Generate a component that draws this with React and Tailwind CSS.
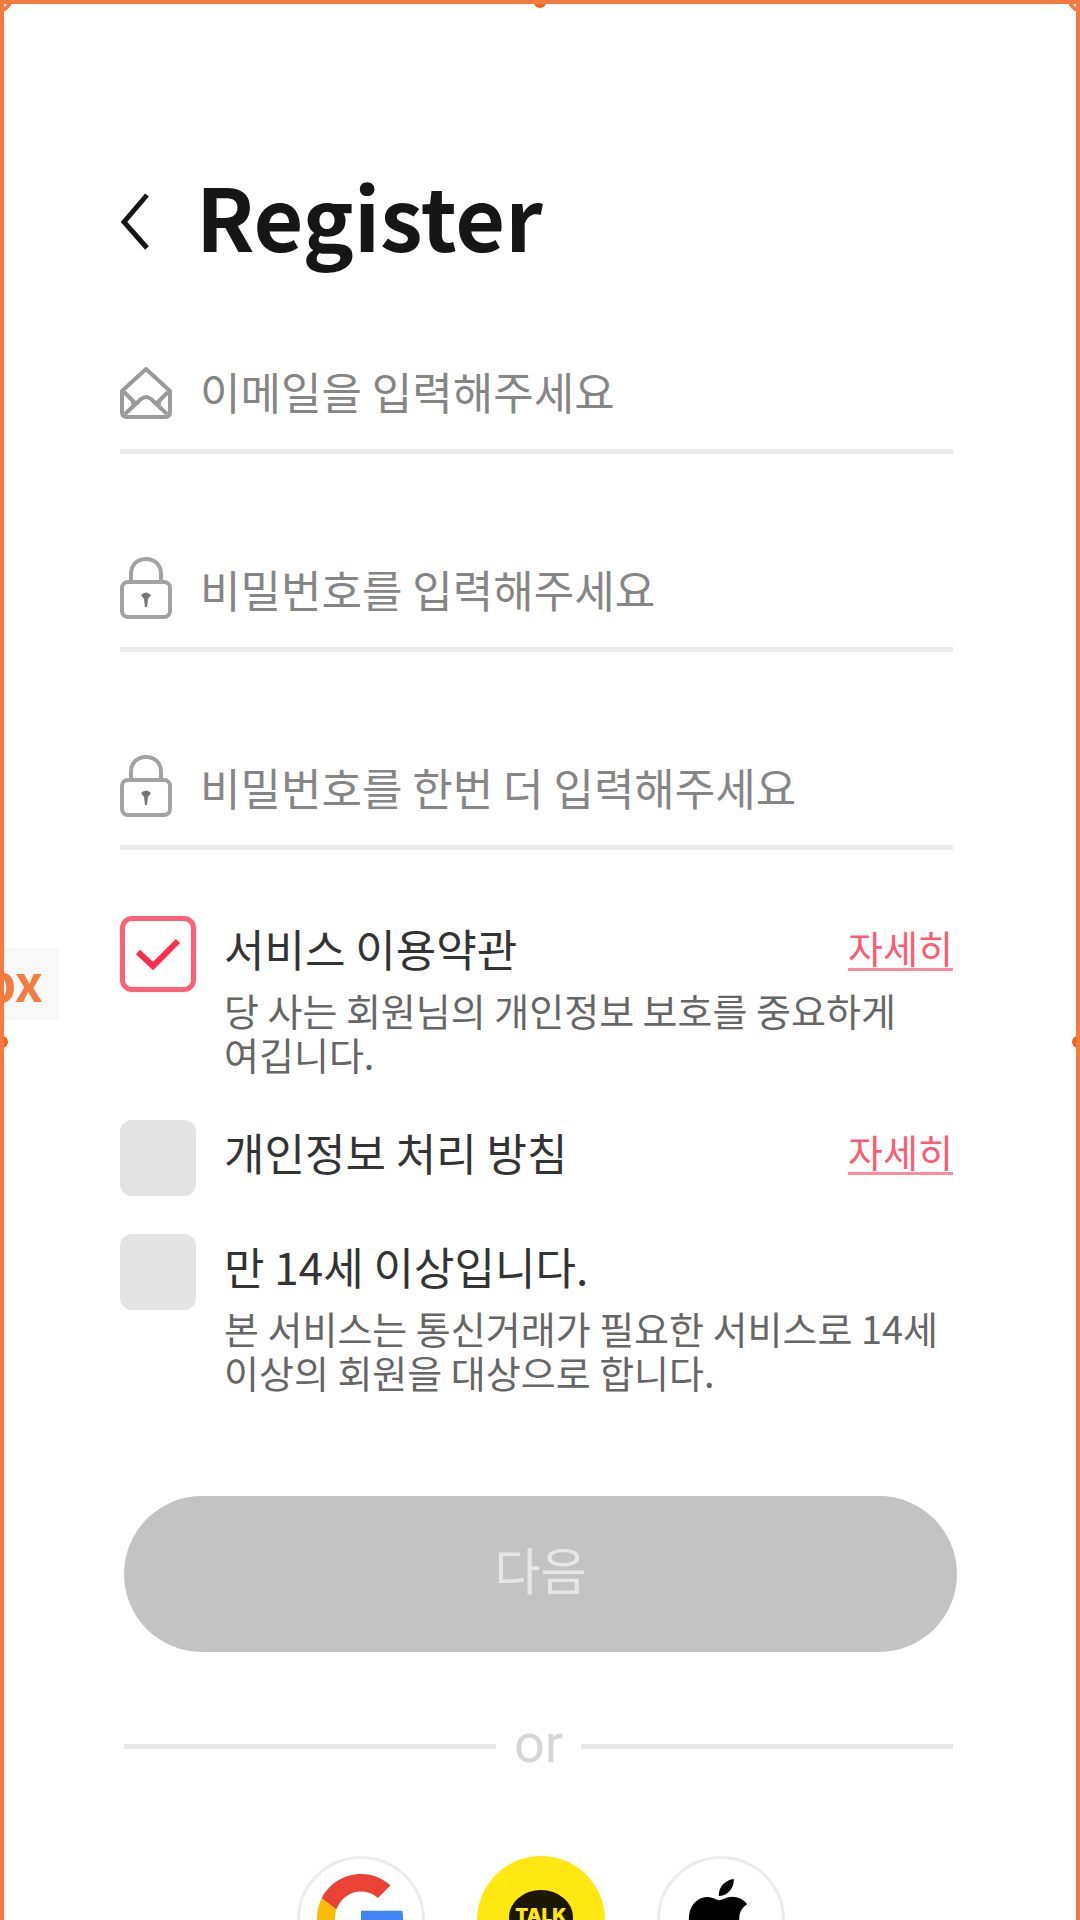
import { useState } from "react";

const ORANGE_DOT = "absolute h-3 w-3 rounded-full bg-[#f2631c]";

function EnvelopeIcon() {
  return (
    <svg className="h-14 w-14 shrink-0" viewBox="0 0 56 56" fill="none" stroke="#9a9a9a" strokeWidth="4" strokeLinejoin="round" aria-hidden="true">
      <path d="M2 28 L26 6 L50 28 V49 Q50 54 45 54 H7 Q2 54 2 49 Z" />
      <path d="M4 29 L15 40" />
      <path d="M48 29 L37 40" />
      <path d="M5 51 L21 36 Q26 32 31 36 L47 51" />
      <path d="M11 40 H19 M33 40 H41" strokeWidth="3" />
    </svg>
  );
}

function LockIcon() {
  return (
    <svg className="h-16 w-14 shrink-0" viewBox="0 0 56 64" fill="none" stroke="#a2a2a2" strokeWidth="4" aria-hidden="true">
      <rect x="2" y="25" width="48" height="35" rx="6" />
      <path d="M11 25 V17 C11 8 17 2 26 2 C35 2 41 8 41 17 V25" />
      <path d="M21 38 Q26 33 31 38 L28 42 L27 50 H25 L24 42 Z" fill="#757575" stroke="none" />
    </svg>
  );
}

function Field({ id, type, placeholder, icon }) {
  return (
    <label htmlFor={id} className="mb-[82px] flex h-[116px] items-center gap-6 border-b-[5px] border-[#ebebeb] pb-1.5">
      {icon}
      <input
        id={id}
        type={type}
        aria-label={placeholder}
        placeholder={placeholder}
        className="h-16 min-w-0 flex-1 bg-transparent text-[44px] text-[#333] outline-none placeholder:text-[#858585]"
      />
    </label>
  );
}

function Term({ id, title, detail, link, defaultChecked }) {
  const [checked, setChecked] = useState(!!defaultChecked);
  return (
    <div className="flex items-start gap-7">
      <span className="relative h-[76px] w-[76px] shrink-0">
        <input
          id={id}
          type="checkbox"
          checked={checked}
          onChange={(e) => setChecked(e.target.checked)}
          className="h-full w-full appearance-none rounded-xl bg-[#e3e3e3] checked:border-[5px] checked:border-[#ff6078] checked:bg-white"
        />
        {checked && (
          <svg className="pointer-events-none absolute inset-0" viewBox="0 0 76 76" fill="none" stroke="#ff2d4b" strokeWidth="6" aria-hidden="true">
            <path d="M18 36 L33 50 L58 25" />
          </svg>
        )}
      </span>
      <div className="min-w-0 flex-1">
        <div className="flex items-center justify-between">
          <label htmlFor={id} className="text-[44px] leading-[64px] text-[#333]">{title}</label>
          {link && (
            <a href="#terms" className="border-b-[3px] border-[#ff8a9b] text-[38px] leading-[42px] text-[#ff5a72]">{link}</a>
          )}
        </div>
        {detail && <p className="pt-2 pb-1.5 text-[38px] leading-[44px] break-keep text-[#666]">{detail}</p>}
      </div>
    </div>
  );
}

function GoogleLogo() {
  return (
    <svg className="h-[88px] w-[88px]" viewBox="0 0 48 48" aria-hidden="true">
      <path fill="#EA4335" d="M24 9.5c3.54 0 6.71 1.22 9.21 3.6l6.85-6.85C35.9 2.38 30.47 0 24 0 14.62 0 6.51 5.38 2.56 13.22l7.98 6.19C12.43 13.72 17.74 9.5 24 9.5z" />
      <path fill="#4285F4" d="M46.98 24.55c0-1.57-.15-3.09-.38-4.55H24v9.02h12.94c-.58 2.96-2.26 5.48-4.78 7.18l7.73 6c4.51-4.18 7.09-10.36 7.09-17.65z" />
      <path fill="#FBBC05" d="M10.53 28.59c-.48-1.45-.76-2.99-.76-4.59s.27-3.14.76-4.59l-7.98-6.19C.92 16.46 0 20.12 0 24c0 3.88.92 7.54 2.56 10.78l7.97-6.19z" />
      <path fill="#34A853" d="M24 48c6.48 0 11.93-2.13 15.89-5.81l-7.73-6c-2.15 1.45-4.92 2.3-8.16 2.3-6.26 0-11.57-4.22-13.47-9.91l-7.98 6.19C6.51 42.62 14.62 48 24 48z" />
    </svg>
  );
}

function AppleLogo() {
  return (
    <svg className="h-[74px] w-[74px]" viewBox="0 0 24 24" fill="#000" aria-hidden="true">
      <path d="M12.152 6.896c-.948 0-2.415-1.078-3.96-1.04-2.04.027-3.91 1.183-4.961 3.014-2.117 3.675-.546 9.103 1.519 12.09 1.013 1.454 2.208 3.09 3.792 3.039 1.52-.065 2.09-.987 3.935-.987 1.831 0 2.35.987 3.96.948 1.637-.026 2.676-1.48 3.676-2.948 1.156-1.688 1.636-3.325 1.662-3.415-.039-.013-3.182-1.221-3.22-4.857-.026-3.04 2.48-4.494 2.597-4.559-1.429-2.09-3.623-2.324-4.39-2.376-2-.156-3.675 1.09-4.61 1.09zM15.53 3.83c.843-1.012 1.4-2.427 1.245-3.83-1.207.052-2.662.805-3.532 1.818-.78.896-1.454 2.338-1.273 3.714 1.338.104 2.715-.688 3.559-1.701" />
    </svg>
  );
}

function TalkLogo() {
  return (
    <svg className="h-[60px] w-[64px]" viewBox="0 0 64 60" aria-hidden="true">
      <ellipse cx="32" cy="27" rx="32" ry="27" fill="#1c1700" />
      <path d="M16 44 L13 59 L30 50 Z" fill="#1c1700" />
      <text x="32" y="32" textAnchor="middle" fontFamily="Inter, sans-serif" fontWeight="900" fontSize="19" fill="#ffe812">TALK</text>
    </svg>
  );
}

export default function App() {
  return (
    <div className="relative h-screen overflow-hidden border-4 border-b-0 border-[#f47b40] bg-white font-['Noto_Sans_CJK_KR','Noto_Sans',sans-serif]">
      <main className="pr-[123px] pl-29">
        <header className="flex items-center gap-11 pt-[154px]">
          <button type="button" aria-label="Back" className="h-16 w-8">
            <svg className="h-16 w-8" viewBox="0 0 32 64" fill="none" stroke="#161616" strokeWidth="5" aria-hidden="true">
              <path d="M27 7 L4 34 L27 60" />
            </svg>
          </button>
          <h1 className="pb-2.5 text-[86px] leading-[114px] font-bold text-[#161616]">Register</h1>
        </header>

        <form className="pt-[56px]" onSubmit={(e) => e.preventDefault()}>
          <Field id="email" type="email" placeholder="이메일을 입력해주세요" icon={<EnvelopeIcon />} />
          <Field id="password" type="password" placeholder="비밀번호를 입력해주세요" icon={<LockIcon />} />
          <Field id="confirm" type="password" placeholder="비밀번호를 한번 더 입력해주세요" icon={<LockIcon />} />

          <div className="-mt-4 flex flex-col gap-[38px]">
            <Term id="service" title="서비스 이용약관" link="자세히" defaultChecked detail="당 사는 회원님의 개인정보 보호를 중요하게 여깁니다." />
            <Term id="privacy" title="개인정보 처리 방침" link="자세히" />
            <Term id="age" title="만 14세 이상입니다." detail="본 서비스는 통신거래가 필요한 서비스로 14세 이상의 회원을 대상으로 합니다." />
          </div>

          <button type="submit" className="mt-24 ml-1 h-[156px] w-full rounded-[78px] bg-[#c3c3c3] pb-3 text-[50px] text-[#e6e6e6]">다음</button>
        </form>

        <div className="ml-1 flex items-center gap-[18px] pt-[58px] text-[#d6d6d6]">
          <span className="h-[5px] flex-1 bg-[#e8e8e8]" />
          <span className="pb-1 font-['Roboto',sans-serif] text-[54px] leading-[68px]">or</span>
          <span className="h-[5px] flex-1 bg-[#e8e8e8]" />
        </div>

        <div className="flex justify-center gap-[52px] pt-[74px] pl-2">
          <button type="button" aria-label="Google" className="flex h-32 w-32 items-center justify-center rounded-full border-[3px] border-[#ececec] bg-white pb-1"><GoogleLogo /></button>
          <button type="button" aria-label="Kakao Talk" className="flex h-32 w-32 items-center justify-center rounded-full bg-[#ffe812]"><TalkLogo /></button>
          <button type="button" aria-label="Apple" className="flex h-32 w-32 items-center justify-center rounded-full border-[3px] border-[#ececec] bg-white pr-1 pb-2"><AppleLogo /></button>
        </div>
      </main>

      {/* Selection handles of the frame */}
      <span className={`${ORANGE_DOT} -top-2 left-1/2 -ml-1.5`} />
      <span className={`${ORANGE_DOT} top-[1032px] -left-2`} />
      <span className={`${ORANGE_DOT} top-[1032px] -right-2`} />
      <span className="absolute -top-4 -left-4 h-6 w-6 rounded-full border-4 border-[#f47b40] bg-white" />
      <span className="absolute -top-4 -right-4 h-6 w-6 rounded-full border-4 border-[#f47b40] bg-white" />
      <span className="absolute top-[944px] -left-10 flex h-[72px] items-center rounded bg-[#f8f8f8] pr-4 pb-2 pl-5 text-[50px] font-bold text-[#f47b40]">px</span>
    </div>
  );
}
